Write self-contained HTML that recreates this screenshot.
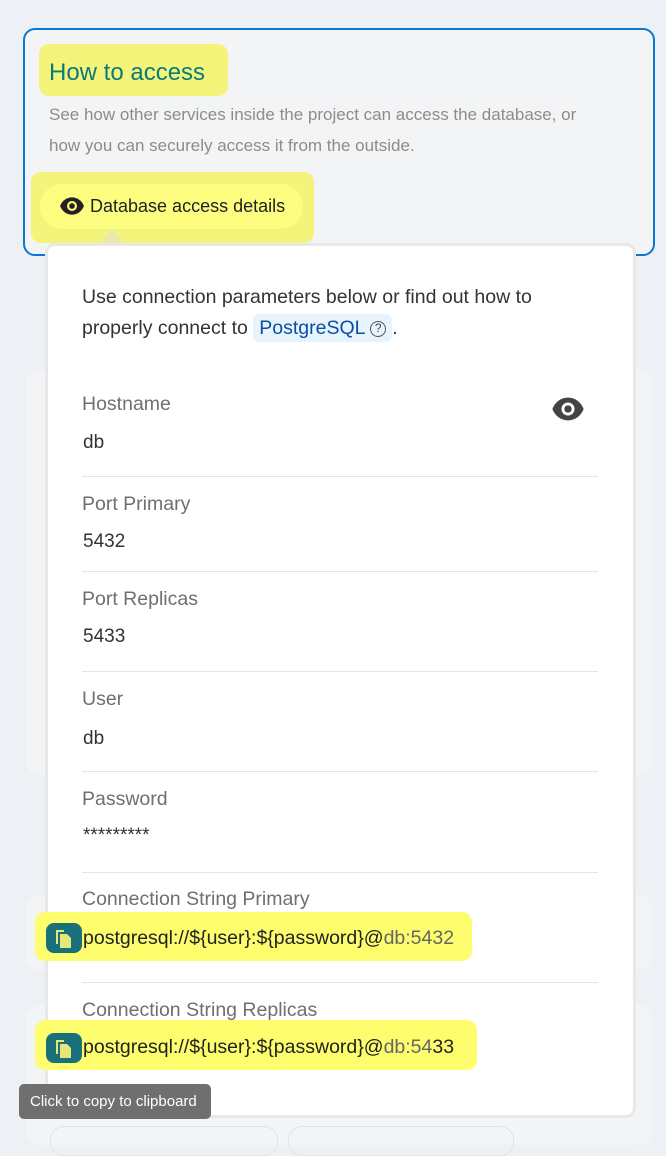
<!DOCTYPE html>
<html><head><meta charset="utf-8"><style>
*{margin:0;padding:0;box-sizing:border-box}
body{width:666px;height:1138px;background:#edf0f4;font-family:"Liberation Sans",sans-serif;position:relative;overflow:hidden}
.a{position:absolute}
.lbl{position:absolute;left:82px;font-size:19.5px;color:#6f6f6f}
.val{position:absolute;left:83px;font-size:19px;color:#333}
.hr{position:absolute;left:82px;width:516px;height:1px;background:#e6e6e6}
.hl{position:absolute;background:#fdfd6e;border-radius:10px}
.cp{position:absolute;left:46px;width:36px;height:30px;background:#17707a;border-radius:8px}
.cs{position:absolute;left:83px;font-size:19.5px;color:#222}
</style></head><body>
<div class="a" style="left:26px;top:370px;width:626px;height:405px;background:#f3f4f6;border-radius:14px"></div>
<div class="a" style="left:26px;top:895px;width:626px;height:75px;background:#f3f4f6;border-radius:14px"></div>
<div class="a" style="left:26px;top:1005px;width:626px;height:140px;background:#f3f4f6;border-radius:14px"></div>
<div class="a" style="left:50px;top:1126px;width:228px;height:30px;border:1px solid #dfe2e6;border-radius:14px"></div>
<div class="a" style="left:288px;top:1126px;width:226px;height:30px;border:1px solid #dfe2e6;border-radius:14px"></div>

<div class="a" style="left:23px;top:28px;width:632px;height:228px;border:2px solid #0a78d0;border-radius:12px;background:#f3f4f6"></div>
<div class="hl" style="left:39px;top:44px;width:189px;height:52px;background:#f4f47a"></div>
<div class="a" style="left:49px;top:59px;font-size:24px;color:#0b7a7a">How to access</div>
<div class="a" style="left:49px;top:99px;font-size:17px;color:#8c8c8c;line-height:31px;width:560px">See how other services inside the project can access the database, or how you can securely access it from the outside.</div>
<div class="hl" style="left:31px;top:172px;width:283px;height:71px;background:#f4f47a"></div>
<div class="a" style="left:40px;top:184px;width:263px;height:45px;background:#fdfd80;border-radius:23px"></div>
<svg class="a" style="left:59px;top:195px" width="26" height="22" viewBox="0 0 24 20"><path d="M12 2C6.5 2 2.5 5.8 1 10c1.5 4.2 5.5 8 11 8s9.5-3.8 11-8c-1.5-4.2-5.5-8-11-8z" fill="#222"/><circle cx="12" cy="10" r="4.6" fill="#fdfd80"/><circle cx="12" cy="10" r="2.6" fill="#222"/></svg>
<div class="a" style="left:90px;top:196px;font-size:18px;color:#222">Database access details</div>

<div class="a" style="left:45px;top:243px;width:591px;height:875px;background:#fff;border:3px solid #e8e8e8;border-radius:10px"></div>
<div class="a" style="left:100px;top:229px;width:0;height:0;border-left:12px solid transparent;border-right:12px solid transparent;border-bottom:14px solid #e8e8b0"></div>
<div class="a" style="left:82px;top:282px;font-size:19.5px;color:#333;line-height:31px;width:520px">Use connection parameters below or find out how to<br>properly connect to <span style="background:#e8f4fd;color:#0a4fa0;border-radius:6px;padding:3px 6px">PostgreSQL <span style="color:#444;border:1.5px solid #555;border-radius:50%;display:inline-block;width:16px;height:16px;line-height:13px;text-align:center;font-size:12px;vertical-align:2px">?</span></span>.</div>

<div class="lbl" style="top:393px">Hostname</div>
<svg class="a" style="left:551px;top:396px" width="34" height="26" viewBox="0 0 24 18"><path d="M12 1C6.5 1 2.5 4.8 1 9c1.5 4.2 5.5 8 11 8s9.5-3.8 11-8C21.5 4.8 17.5 1 12 1z" fill="#444"/><circle cx="12" cy="9" r="4.6" fill="#fff"/><circle cx="12" cy="9" r="2.6" fill="#444"/></svg>
<div class="val" style="top:432px">db</div>
<div class="hr" style="top:476px"></div>
<div class="lbl" style="top:493px">Port Primary</div>
<div class="val" style="top:531px">5432</div>
<div class="hr" style="top:571px"></div>
<div class="lbl" style="top:588px">Port Replicas</div>
<div class="val" style="top:626px">5433</div>
<div class="hr" style="top:671px"></div>
<div class="lbl" style="top:688px">User</div>
<div class="val" style="top:728px">db</div>
<div class="hr" style="top:771px"></div>
<div class="lbl" style="top:788px">Password</div>
<div class="val" style="top:825px">*********</div>
<div class="hr" style="top:872px"></div>
<div class="lbl" style="top:888px">Connection String Primary</div>
<div class="hl" style="left:35px;top:912px;width:437px;height:49px"></div>
<div class="cp" style="top:923px"></div>
<svg class="a" style="left:54px;top:928px" width="20" height="21" viewBox="0 0 20 21"><path d="M2 2h8v2H4v12H2z" fill="#e6e67a"/><path d="M6 6h7l4 4v10H6z" fill="#e6e67a"/></svg>
<div class="cs" style="top:927px">postgresql://${user}:${password}@<span style="color:#666">db:5432</span></div>
<div class="hr" style="top:982px"></div>
<div class="lbl" style="top:999px">Connection String Replicas</div>
<div class="hl" style="left:35px;top:1020px;width:442px;height:50px"></div>
<div class="cp" style="top:1033px"></div>
<svg class="a" style="left:54px;top:1038px" width="20" height="21" viewBox="0 0 20 21"><path d="M2 2h8v2H4v12H2z" fill="#e6e67a"/><path d="M6 6h7l4 4v10H6z" fill="#e6e67a"/></svg>
<div class="cs" style="top:1036px">postgresql://${user}:${password}@<span style="color:#666">db:54</span>33</div>
<div class="a" style="left:19px;top:1084px;width:192px;height:35px;background:#6f6f6f;border-radius:5px;color:#fff;font-size:15px;line-height:35px;padding-left:11px">Click to copy to clipboard</div>
</body></html>
